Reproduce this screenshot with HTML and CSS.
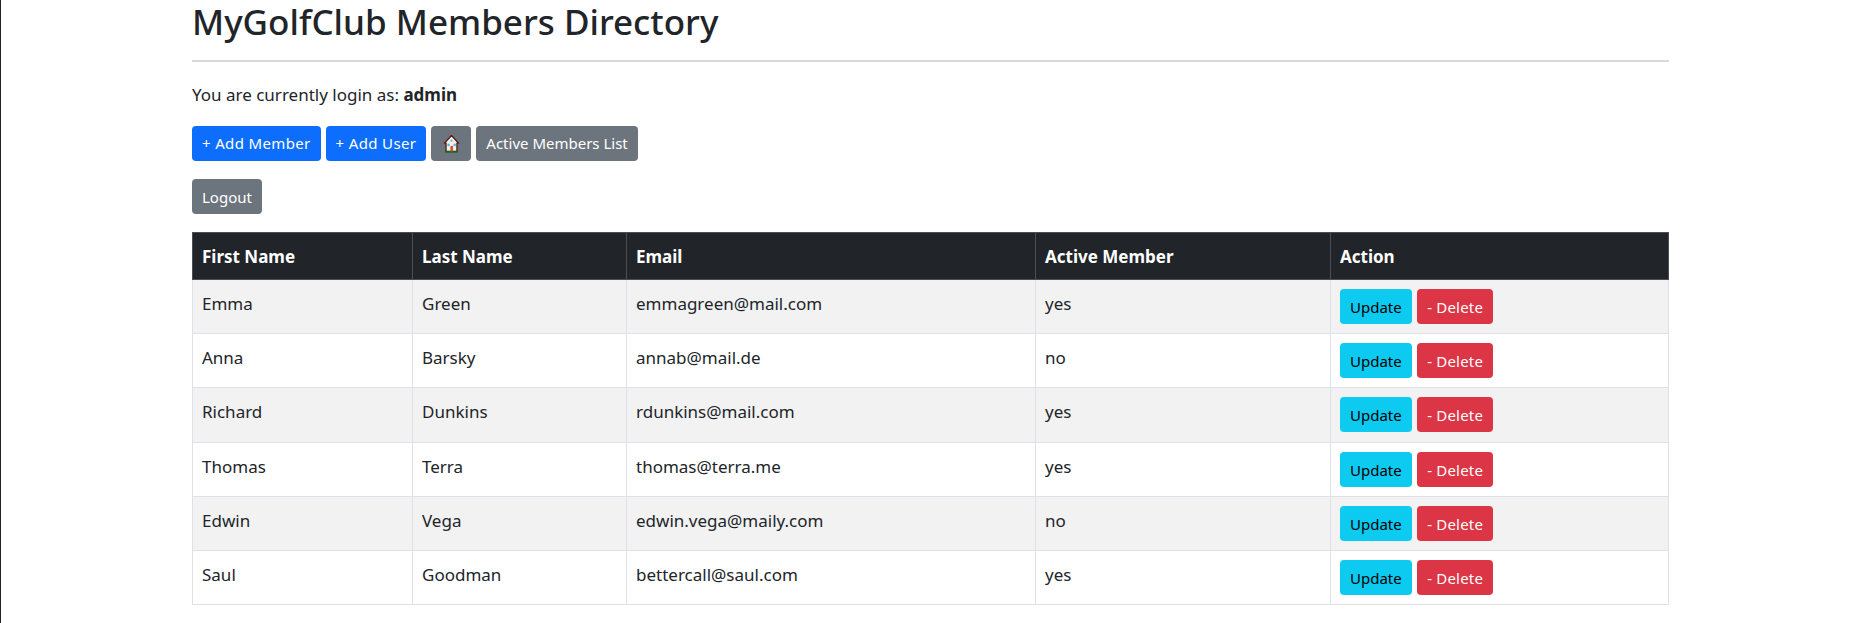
FILE: index.html
```html
<!DOCTYPE html>
<html lang="en">
<head>
    <meta charset="UTF-8">
    <meta name="viewport" content="width=device-width, initial-scale=1.0">
    <title>MyGolfClub Members Directory</title>
    <link rel="stylesheet" href="styles.css">
</head>
<body>
    <div class="container">
        <h1>MyGolfClub Members Directory</h1>
        <hr>
        <p class="login">You are currently login as: <b>admin</b></p>
        <div class="actions">
            <a class="btn btn-primary" href="#">+ Add Member</a>
            <a class="btn btn-primary" href="#">+ Add User</a>
            <a class="btn btn-secondary btn-home" href="#" aria-label="Home">
                <svg width="17" height="18" viewBox="2 1 14 16.5">
                    <path d="M9 1.5 L2.5 8.5 H4 V16 H14 V8.5 H15.5 Z" fill="#f4f1ea" stroke="#5b1a1a" stroke-width="1.2" stroke-linejoin="round"/>
                    <path d="M3 16.4 H15" stroke="#0c6b1e" stroke-width="1.6"/>
                    <rect x="8" y="11" width="2.4" height="5" fill="#d8502a"/>
                    <rect x="5.2" y="9" width="2.2" height="2.2" fill="#57b7e6"/>
                    <rect x="10.8" y="9" width="2.2" height="2.2" fill="#57b7e6"/>
                    <circle cx="9" cy="6.2" r="1" fill="#57b7e6"/>
                </svg>
            </a>
            <a class="btn btn-secondary" href="#">Active Members List</a>
        </div>
        <div class="actions">
            <a class="btn btn-secondary btn-logout" href="#">Logout</a>
        </div>
        <table>
            <thead>
                <tr>
                    <th class="col-first">First Name</th>
                    <th class="col-last">Last Name</th>
                    <th class="col-email">Email</th>
                    <th class="col-active">Active Member</th>
                    <th>Action</th>
                </tr>
            </thead>
            <tbody>
                <tr>
                    <td>Emma</td><td>Green</td><td>emmagreen@mail.com</td><td>yes</td>
                    <td class="cell-action"><a class="btn btn-info" href="#">Update</a> <a class="btn btn-danger" href="#">- Delete</a></td>
                </tr>
                <tr>
                    <td>Anna</td><td>Barsky</td><td>annab@mail.de</td><td>no</td>
                    <td class="cell-action"><a class="btn btn-info" href="#">Update</a> <a class="btn btn-danger" href="#">- Delete</a></td>
                </tr>
                <tr>
                    <td>Richard</td><td>Dunkins</td><td>rdunkins@mail.com</td><td>yes</td>
                    <td class="cell-action"><a class="btn btn-info" href="#">Update</a> <a class="btn btn-danger" href="#">- Delete</a></td>
                </tr>
                <tr>
                    <td>Thomas</td><td>Terra</td><td>thomas@terra.me</td><td>yes</td>
                    <td class="cell-action"><a class="btn btn-info" href="#">Update</a> <a class="btn btn-danger" href="#">- Delete</a></td>
                </tr>
                <tr>
                    <td>Edwin</td><td>Vega</td><td>edwin.vega@maily.com</td><td>no</td>
                    <td class="cell-action"><a class="btn btn-info" href="#">Update</a> <a class="btn btn-danger" href="#">- Delete</a></td>
                </tr>
                <tr>
                    <td>Saul</td><td>Goodman</td><td>bettercall@saul.com</td><td>yes</td>
                    <td class="cell-action"><a class="btn btn-info" href="#">Update</a> <a class="btn btn-danger" href="#">- Delete</a></td>
                </tr>
            </tbody>
        </table>
    </div>
</body>
</html>
```

FILE: styles.css
```css
body {
    margin: 0;
    height: 623px;
    overflow: hidden;
    background-color: white;
    border-left: 1px solid #222;
    font-family: "Noto Sans", Arial, sans-serif;
    font-size: 17px;
    line-height: 24px;
    color: #212529;
}

.container {
    width: 1477px;
    margin-left: 191px;
}

h1 {
    margin: 0;
    height: 43px;
    font-size: 35px;
    line-height: 43px;
    font-weight: 500;
}

hr {
    margin: 17px 0 21px;
    border: none;
    border-top: 2px solid #d9d9d9;
}

.login {
    margin: 0 0 19px;
}

.actions {
    margin-bottom: 18px;
    display: flex;
    gap: 5px;
}

.btn {
    display: inline-block;
    box-sizing: border-box;
    height: 35px;
    padding: 5px 10px 0;
    border-radius: 4px;
    font-size: 15px;
    line-height: 24px;
    text-decoration: none;
    text-align: center;
    vertical-align: top;
}

.btn-primary {
    background-color: #0d6efd;
    color: white;
    letter-spacing: 0.35px;
}

.btn-secondary {
    background-color: #6c757d;
    color: white;
}

.btn-logout,
.btn-info,
.btn-danger {
    padding-top: 6px;
}

.btn-info {
    background-color: #0dcaf0;
    color: #000;
}

.btn-danger {
    margin-left: 1px;
    background-color: #dc3545;
    color: white;
    letter-spacing: 0.2px;
}

.btn-home {
    display: flex;
    align-items: center;
    justify-content: center;
    width: 40px;
    padding: 0;
}

table {
    width: 1477px;
    border-collapse: collapse;
    table-layout: fixed;
}

th, td {
    box-sizing: border-box;
    padding: 12px 9px 0;
    border: 1px solid #dee2e6;
    text-align: left;
    vertical-align: top;
}

th {
    height: 47px;
    background-color: #212529;
    border-color: #4a4f54;
    color: white;
    font-weight: 700;
}

td {
    height: 54px;
}

tbody tr:nth-child(3) td {
    height: 55px;
}

td.cell-action {
    padding-top: 9px;
}

tbody tr:nth-child(odd) {
    background-color: #f2f2f2;
}

.col-first {
    width: 220px;
}

.col-last {
    width: 214px;
}

.col-email {
    width: 409px;
}

.col-active {
    width: 295px;
}
```
